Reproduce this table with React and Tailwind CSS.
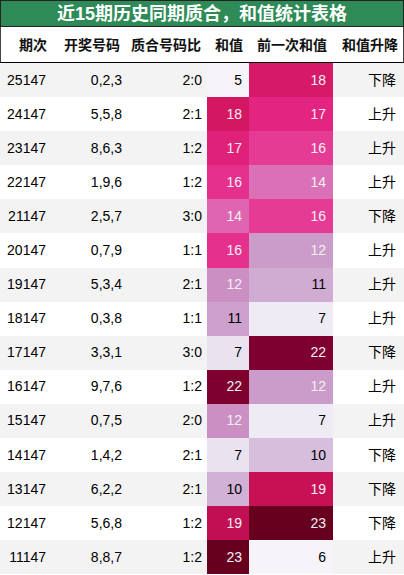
const rows = [
  ['25147', '0,2,3', '2:0', 5, 18, '下降'],
  ['24147', '5,5,8', '2:1', 18, 17, '上升'],
  ['23147', '8,6,3', '1:2', 17, 16, '上升'],
  ['22147', '1,9,6', '1:2', 16, 14, '上升'],
  ['21147', '2,5,7', '3:0', 14, 16, '下降'],
  ['20147', '0,7,9', '1:1', 16, 12, '上升'],
  ['19147', '5,3,4', '2:1', 12, 11, '上升'],
  ['18147', '0,3,8', '1:1', 11, 7, '上升'],
  ['17147', '3,3,1', '3:0', 7, 22, '下降'],
  ['16147', '9,7,6', '1:2', 22, 12, '上升'],
  ['15147', '0,7,5', '2:0', 12, 7, '上升'],
  ['14147', '1,4,2', '2:1', 7, 10, '下降'],
  ['13147', '6,2,2', '2:1', 10, 19, '下降'],
  ['12147', '5,6,8', '1:2', 19, 23, '下降'],
  ['11147', '8,8,7', '1:2', 23, 6, '上升'],
]

// PuRd colour map stops
const stops = [
  [247, 244, 249], [231, 225, 239], [212, 185, 218], [201, 148, 199],
  [223, 101, 176], [231, 41, 138], [206, 18, 86], [152, 0, 67], [103, 0, 31],
]

function gradient(v, min, max) {
  const t = (v - min) / (max - min)
  const pos = Math.min(t * 8, 7.9999)
  const i = Math.floor(pos)
  const f = pos - i
  const c = stops[i].map((a, k) => Math.round(a + (stops[i + 1][k] - a) * f))
  const lin = c.map(x => {
    const s = x / 255
    return s <= 0.03928 ? s / 12.92 : Math.pow((s + 0.055) / 1.055, 2.4)
  })
  const lum = 0.2126 * lin[0] + 0.7152 * lin[1] + 0.0722 * lin[2]
  return {
    backgroundColor: `rgb(${c[0]},${c[1]},${c[2]})`,
    color: lum < 0.408 ? '#f1f1f1' : '#000000',
  }
}

const sums = rows.map(r => r[3])
const prevs = rows.map(r => r[4])
const sMin = Math.min(...sums), sMax = Math.max(...sums)
const pMin = Math.min(...prevs), pMax = Math.max(...prevs)

const cols = 'grid grid-cols-[53px_73px_81px_42px_84px_71px]'
const headers = ['期次', '开奖号码', '质合号码比', '和值', '前一次和值', '和值升降']

export default function App() {
  return (
    <div className="w-[404px] h-[575px] overflow-hidden bg-white text-[14px] text-black" style={{ fontFamily: '"Liberation Sans", "Noto Sans CJK SC", sans-serif' }}>
      {/* title */}
      <div className="h-[27px] bg-[#2e8b57] border border-[#222] flex items-center justify-center text-white text-[18px] font-bold leading-none">
        近15期历史同期质合，和值统计表格
      </div>

      {/* header */}
      <div className={`${cols} h-[36px] border-x border-[#444] border-b border-b-black font-bold text-[#111]`}>
        {headers.map(h => (
          <div key={h} className="flex items-center justify-end pr-[7px] pt-[1px]">{h}</div>
        ))}
      </div>

      {/* rows */}
      {rows.map((r, i) => (
        <div key={r[0]} className={`${cols} h-[34.1px] ${i % 2 === 0 ? 'bg-[#f3f3f3]' : 'bg-white'}`}>
          <div className="flex items-center justify-end pr-[7px]">{r[0]}</div>
          <div className="flex items-center justify-end pr-[4px]">{r[1]}</div>
          <div className="flex items-center justify-end pr-[5px]">{r[2]}</div>
          <div className="flex items-center justify-end pr-[7px]" style={gradient(r[3], sMin, sMax)}>{r[3]}</div>
          <div className="flex items-center justify-end pr-[7px]" style={gradient(r[4], pMin, pMax)}>{r[4]}</div>
          <div className="flex items-center justify-end pr-[8px]">{r[5]}</div>
        </div>
      ))}
    </div>
  )
}
